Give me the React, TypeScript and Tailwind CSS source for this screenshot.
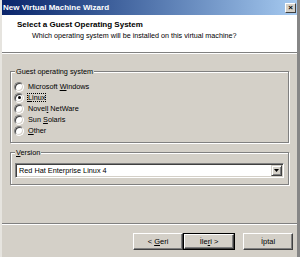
const face = "[font-family:'Liberation_Sans',Arial,sans-serif]";

const Radio = ({ checked }: { checked?: boolean }) => (
  <span className="flex h-[10px] w-[10px] shrink-0 items-center justify-center rounded-full border border-[#808080] border-b-white border-r-white bg-white shadow-[inset_1px_1px_0_#404040,inset_-1px_-1px_0_#d4d0c8]">
    {checked && <span className="h-[3px] w-[3px] rounded-full bg-black" />}
  </span>
);

const options = [
  { pre: 'Microsoft ', key: 'W', post: 'indows' },
  { pre: '', key: 'L', post: 'inux', checked: true },
  { pre: 'Novel', key: 'l', post: ' NetWare' },
  { pre: 'Sun ', key: 'S', post: 'olaris' },
  { pre: '', key: 'O', post: 'ther' },
];

const Button = ({ children, isDefault }: { children: React.ReactNode; isDefault?: boolean }) => (
  <div className={isDefault ? 'h-[17px] w-[52px] border border-black' : 'h-[17px] w-[50px]'}>
    <div className="flex h-full w-full items-center justify-center whitespace-pre border border-white border-b-[#404040] border-r-[#404040] bg-[#d4d0c8] text-[7.5px] leading-none text-black shadow-[inset_-1px_-1px_0_#808080]">
      {children}
    </div>
  </div>
);

export default function App() {
  return (
    <div className={`flex h-[257px] w-[300px] overflow-hidden bg-[#d4d0c8] ${face}`}>
      <div className="flex w-[297px] flex-col border-l-2 border-[#e6e4df]">
        <div className="flex h-[15px] shrink-0 items-center justify-between bg-gradient-to-r from-[#0a246a] to-[#a6caf0] pl-[1px] pr-[1px]">
          <span className="text-[8px] font-bold leading-none text-white">New Virtual Machine Wizard</span>
          <span className="flex h-[10px] w-[11px] items-center justify-center border border-white border-b-[#404040] border-r-[#404040] bg-[#d4d0c8] text-[8px] font-bold leading-none text-black">
            ×
          </span>
        </div>

        <div className="h-[37px] shrink-0 bg-white pt-[5px]">
          <div className="pl-[15px] text-[8px] font-bold leading-[10px] text-black">Select a Guest Operating System</div>
          <div className="mt-[1px] pl-[30px] text-[7.2px] leading-[10px] text-black">
            Which operating system will be installed on this virtual machine?
          </div>
        </div>
        <div className="h-[1px] shrink-0 bg-[#808080]" />
        <div className="h-[1px] shrink-0 bg-white" />

        <div className="px-[8px]">
          <div className="relative mt-[17px] border border-[#808080] px-[3px] pb-[6px] pt-[9px] shadow-[inset_1px_1px_0_#fff,1px_1px_0_#fff]">
            <span className="absolute -top-[5px] left-[4px] bg-[#d4d0c8] px-[1px] text-[7.3px] leading-[9px] text-black">
              Guest operating system
            </span>
            {options.map((o) => (
              <div key={o.pre + o.key} className="flex h-[11px] items-center gap-[4px] text-[7.3px] leading-none text-black">
                <Radio checked={o.checked} />
                <span className={o.checked ? 'whitespace-pre outline-1 outline-dotted outline-black' : 'whitespace-pre'}>
                  {o.pre}
                  <u>{o.key}</u>
                  {o.post}
                </span>
              </div>
            ))}
          </div>

          <div className="relative mt-[9px] border border-[#808080] px-[4px] pb-[6px] pt-[10px] shadow-[inset_1px_1px_0_#fff,1px_1px_0_#fff]">
            <span className="absolute -top-[5px] left-[4px] bg-[#d4d0c8] px-[1px] text-[7.3px] leading-[9px] text-black">
              <u>V</u>ersion
            </span>
            <div className="flex h-[15px] items-center border border-[#808080] border-b-white border-r-white bg-white shadow-[inset_1px_1px_0_#404040,inset_-1px_-1px_0_#d4d0c8]">
              <span className="flex-1 pl-[3px] text-[7.3px] leading-none text-black">Red Hat Enterprise Linux 4</span>
              <span className="mr-[1px] flex h-[11px] w-[11px] items-center justify-center border border-[#d4d0c8] border-b-[#404040] border-r-[#404040] bg-[#d4d0c8] shadow-[inset_1px_1px_0_#fff,inset_-1px_-1px_0_#808080]">
                <svg width="5" height="4" viewBox="0 0 5 4">
                  <path d="M0 0h5L2.5 3z" fill="#000" />
                </svg>
              </span>
            </div>
          </div>
        </div>

        <div className="mt-[38px] h-[1px] shrink-0 bg-[#808080]" />
        <div className="h-[1px] shrink-0 bg-white" />

        <div className="mt-[8px] flex justify-end pr-[4px]">
          <Button>
            {'< '}
            <u>G</u>
            {'eri'}
          </Button>
          <Button isDefault>
            {'İle'}
            <u>r</u>
            {'i >'}
          </Button>
          <div className="w-[8px]" />
          <Button>İptal</Button>
        </div>
      </div>
      <div className="w-[3px] bg-[#868686]" />
    </div>
  );
}
